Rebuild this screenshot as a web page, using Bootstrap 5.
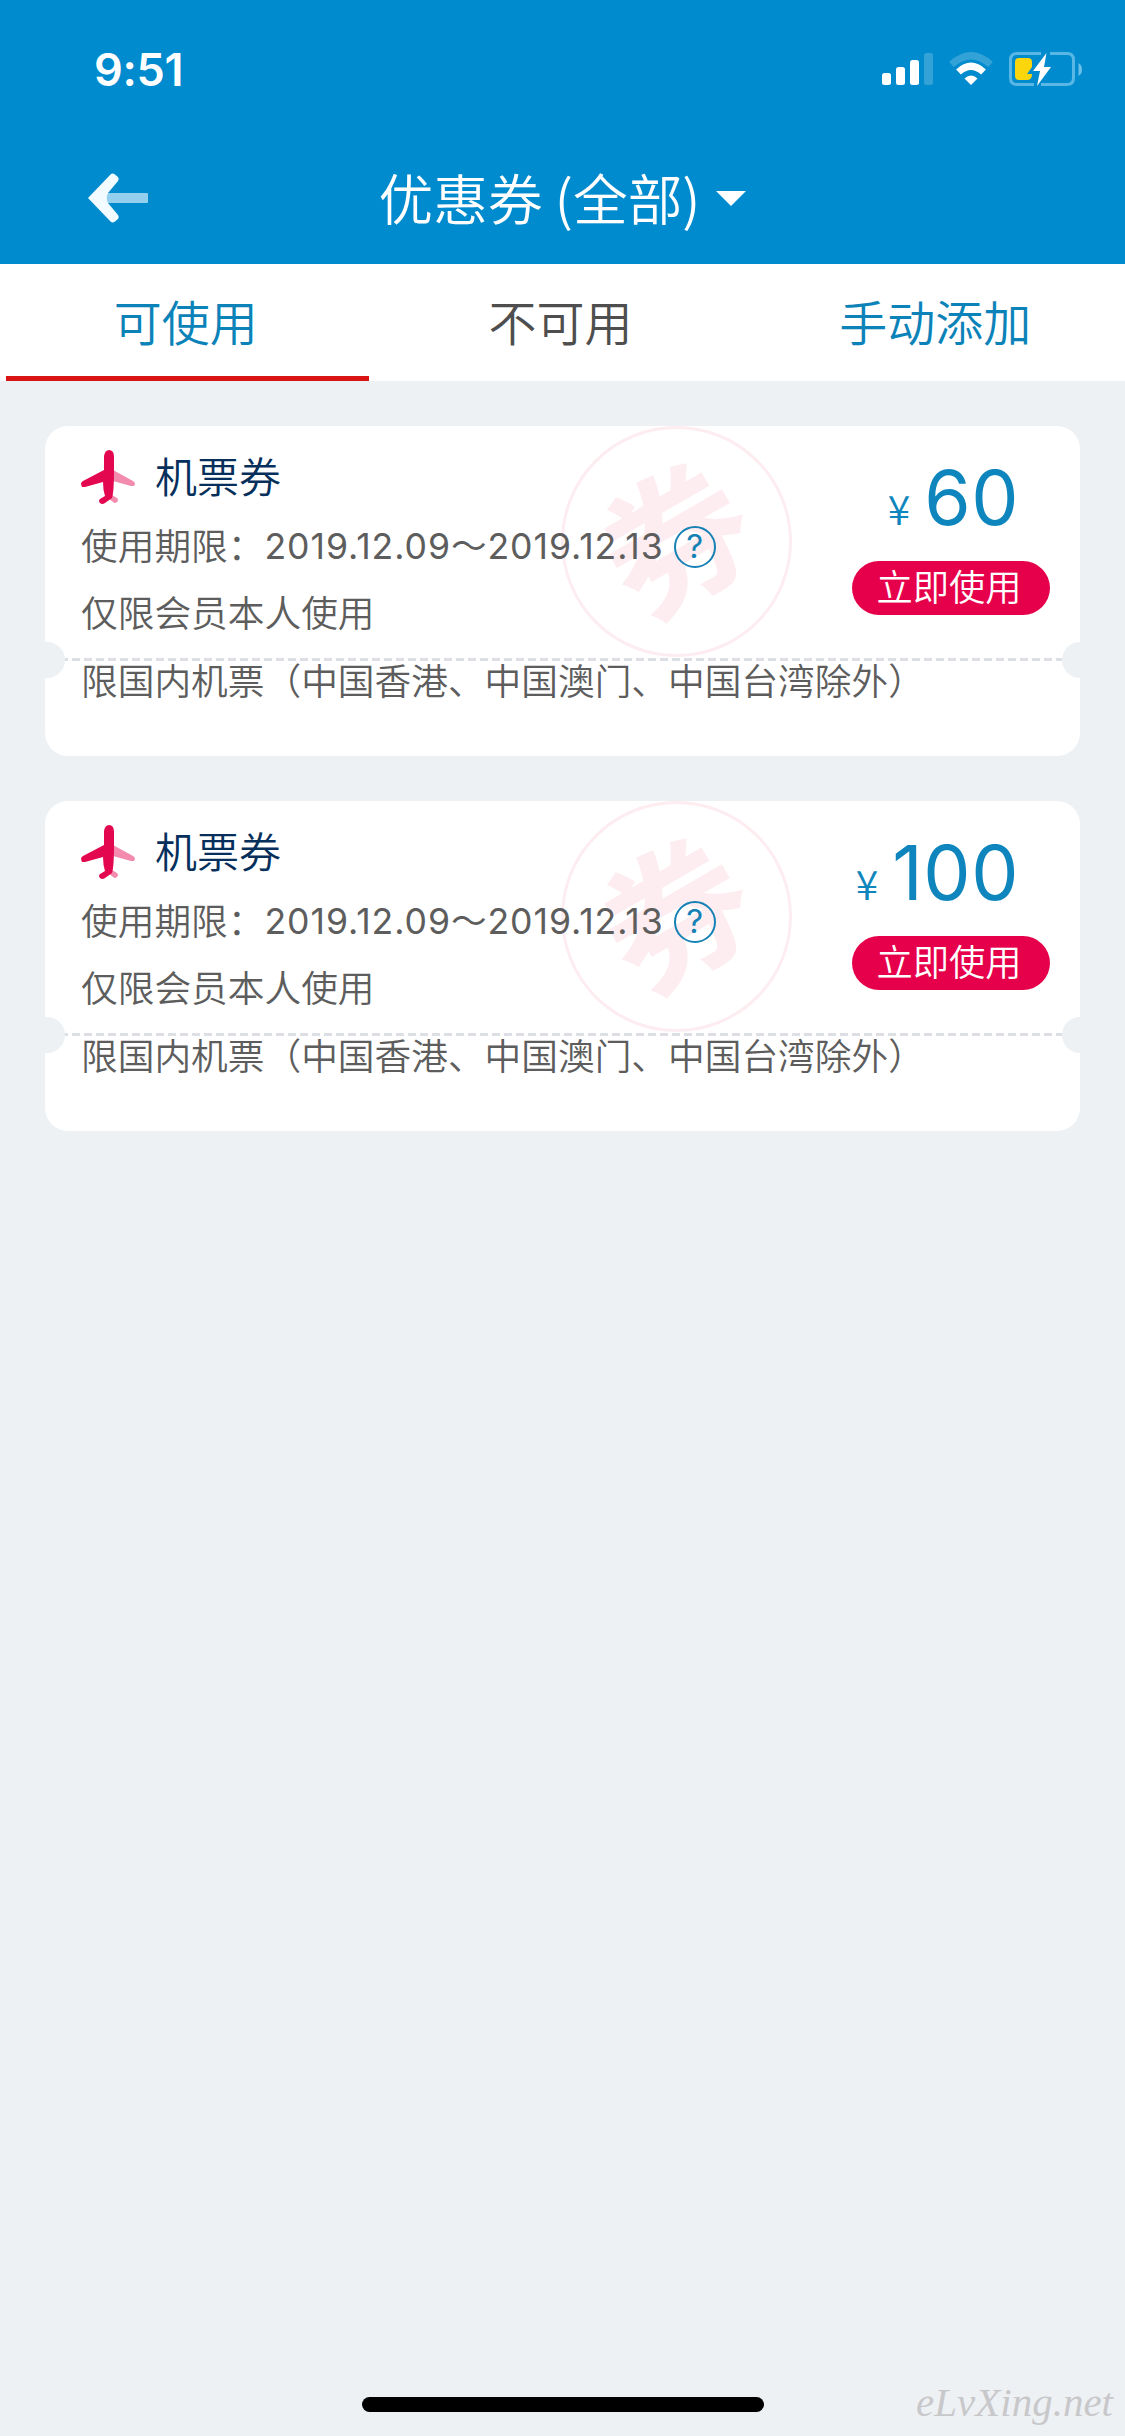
<!DOCTYPE html>
<html lang="zh-CN">
<head>
<meta charset="utf-8">
<meta name="viewport" content="width=device-width, initial-scale=1">
<title>优惠券</title>
<link href="https://cdn.jsdelivr.net/npm/bootstrap@5.3.0/dist/css/bootstrap.min.css" rel="stylesheet">
<style>
body{background:#edf1f4;font-family:Inter,"Noto Sans CJK SC",sans-serif;font-weight:350;width:1125px}
.screen{height:2436px;overflow:hidden}
.app-head{background:#008bce;height:264px;color:#fff}
.status-bar{height:138px;padding:0 40px 0 94px}
.clock{font-size:45px;font-weight:600;line-height:1;letter-spacing:-.3px}
.title-bar{height:120px}
.back-btn{left:88px}
.page-title{font-size:54.7px;line-height:60px}
.page-title .paren{font-family:"Noto Sans CJK SC",sans-serif}
.tab-row{height:117px;background:#fff;font-size:48px}
.tab-row .nav-link{color:#0b83b9;border-radius:0;padding:0;height:117px;line-height:120px}
.tab-row .nav-link.off{color:#4e4e4e}
.tab-row .nav-link.first-tab,.tab-row .nav-link.off{padding-right:3px}
.tab-row .nav-link.add{padding-right:4px}
.tab-line{left:6px;bottom:0;width:363px;height:5px;background:#d91414}
.coupons{padding:45px;gap:45px}
.coupon{height:330px;border:0;border-radius:23px;overflow:hidden;color:#5d5d5d}
.coupon-name{font-size:42px;line-height:54px;color:#06305b;margin-bottom:9px}
.name-text{margin-left:20px;padding-top:2px;line-height:52px}
.coupon-info{padding:24px 0 0 36px}
.info-line{font-size:36.7px;line-height:67.3px;height:67.3px;white-space:nowrap}
.dates{font-size:35.6px;font-weight:400;letter-spacing:.95px}
.help{width:42px;height:42px;margin-left:10px;line-height:1;border:2px solid #1681b5;border-radius:50%;color:#1681b5;font-size:33px;font-weight:400}
.coupon-pay{padding:31px 30px 0 0}
.amount{color:#0e86bd;height:104px;padding-right:31px}
.amount .yen{font-size:41px;line-height:81px;font-family:"Noto Sans CJK SC",sans-serif}
.amount .num{font-size:75px;line-height:81px;font-weight:400;margin-left:14px;letter-spacing:.5px}
.use-btn{width:198px;height:54px;background:#e6004b;color:#fff;font-size:36.3px;line-height:52px;padding:0 4px 0 0;border:0;font-weight:350}
.use-btn:hover{background:#e6004b;color:#fff}
.seal{left:516px;top:0;width:231px;height:231px;border:3px solid #fdedf1;border-radius:50%}
.seal span{font-size:146px;line-height:1;font-weight:700;color:#fdedf1;transform:rotate(-30deg)}
.perforation{left:15px;right:15px;top:232px;height:3px;background:repeating-linear-gradient(90deg,#dce0e4 0 8px,transparent 8px 12px)}
.notch{width:36px;height:36px;border-radius:50%;background:#edf1f4;top:216px}
.notch-l{left:-16px}
.notch-r{right:-18px}
.home-bar{left:362px;bottom:24px;width:402px;height:15px;border-radius:8px;background:#000}
.site-mark{right:12px;bottom:12px;font:italic 400 41px/44px "Liberation Serif",serif;color:#c8c8ca}
</style>
</head>
<body>
<div class="screen position-relative d-flex flex-column">
  <header class="app-head">
    <div class="status-bar d-flex align-items-center justify-content-between">
      <span class="clock">9:51</span>
      <svg width="204" height="36" viewBox="881 51 204 36">
        <g fill="#fff"><rect x="882" y="73" width="9" height="12" rx="2.5"/><rect x="896" y="67" width="9" height="18" rx="2.5"/><rect x="910" y="60" width="9" height="25" rx="2.5"/><rect x="924" y="53" width="9" height="32" rx="2.5" opacity=".2"/></g>
        <path d="M951.500 64.500Q971 47 990.500 64.500" fill="none" stroke="#fff" stroke-width="7" opacity=".2"/>
        <path d="M958.500 72Q971 60.500 983.500 72" fill="none" stroke="#fff" stroke-width="7"/>
        <path d="M964.500 78.500Q971 72.500 977.500 78.500L971 85Z" fill="#fff"/>
        <path d="M1041 53.500H1017Q1010.500 53.500 1010.500 60V78Q1010.500 84.500 1017 84.500H1034M1050 53.500H1067Q1073.500 53.500 1073.500 60V78Q1073.500 84.500 1067 84.500H1041" fill="none" stroke="#58b7e5" stroke-width="3"/>
        <path d="M1078.500 63Q1082 65 1082 69.500T1078.500 76Z" fill="#6cc0e8"/>
        <path d="M1019 58H1028Q1032 58 1032 62V67L1027 74H1032Q1032 80 1027 80H1019Q1015 80 1015 76V62Q1015 58 1019 58Z" fill="#fcd60c"/>
        <path d="M1046.500 53L1033 71H1040L1037 86L1051 67H1044Z" fill="#fff"/>
      </svg>
    </div>
    <div class="title-bar position-relative d-flex align-items-center justify-content-center">
      <a class="back-btn position-absolute d-flex" href="#" aria-label="返回">
        <svg width="60" height="50" viewBox="0 0 60 50"><path d="M18 20H59Q60 20 60 21V29Q60 30 59 30H18Z" fill="#94cfed"/><path d="M0 25L23 1Q25 0 27 1.500L30 4Q31.500 6 30 8L20 20Q17.500 25 20 30L30 42Q31.500 44 30 46L27 48.500Q25 50 23 49Z" fill="#f2fbff"/></svg>
      </a>
      <div class="page-title d-flex align-items-center"><span>优惠券<span class="paren"> (</span>全部<span class="paren">)</span></span>
        <svg class="ms-3" width="30" height="15" viewBox="0 0 30 15"><path d="M0 0H30L15 15Z" fill="#fff"/></svg></div>
    </div>
  </header>
  <nav class="tab-row nav nav-justified position-relative">
    <a class="nav-link col first-tab" href="#">可使用</a>
    <a class="nav-link col off" href="#">不可用</a>
    <a class="nav-link col add" href="#">手动添加</a>
    <span class="tab-line position-absolute"></span>
  </nav>
  <main class="coupons d-flex flex-column flex-grow-1">
    <article class="card coupon">
      <div class="seal position-absolute d-flex align-items-center justify-content-center"><span>券</span></div>
      <div class="perforation position-absolute"></div><i class="notch notch-l position-absolute"></i><i class="notch notch-r position-absolute"></i>
      <div class="coupon-info position-relative">
        <div class="d-flex align-items-center coupon-name"><svg width="54" height="54" viewBox="0 0 54 54"><path d="M32 20L52 31Q54 32 54 34L53 36H50L32 31ZM31 45L36 48Q38 50 36 52Q34 54 32 52L27 48Z" fill="#f28bad"/><path d="M28 0Q24 0 23 6V20L2 31Q0 32 0 34L1 37H4L22 32Q22 40 24 46L19 49Q17 51 19 53Q21 55 24 53L31 48Q33 42 33 20V7Q33 0 28 0Z" fill="#e30750"/></svg><span class="name-text">机票券</span></div>
        <div class="info-line d-flex align-items-center"><span>使用期限：</span><span class="dates">2019.12.09～2019.12.13</span><span class="help d-flex align-items-center justify-content-center">?</span></div>
        <div class="info-line">仅限会员本人使用</div>
        <div class="info-line">限国内机票（中国香港、中国澳门、中国台湾除外）</div>
      </div>
      <div class="coupon-pay position-absolute end-0 top-0 d-flex flex-column align-items-end">
        <div class="amount d-flex align-items-baseline"><span class="yen">¥</span><span class="num">60</span></div>
        <button class="btn rounded-pill use-btn">立即使用</button>
      </div>
    </article>
    <article class="card coupon">
      <div class="seal position-absolute d-flex align-items-center justify-content-center"><span>券</span></div>
      <div class="perforation position-absolute"></div><i class="notch notch-l position-absolute"></i><i class="notch notch-r position-absolute"></i>
      <div class="coupon-info position-relative">
        <div class="d-flex align-items-center coupon-name"><svg width="54" height="54" viewBox="0 0 54 54"><path d="M32 20L52 31Q54 32 54 34L53 36H50L32 31ZM31 45L36 48Q38 50 36 52Q34 54 32 52L27 48Z" fill="#f28bad"/><path d="M28 0Q24 0 23 6V20L2 31Q0 32 0 34L1 37H4L22 32Q22 40 24 46L19 49Q17 51 19 53Q21 55 24 53L31 48Q33 42 33 20V7Q33 0 28 0Z" fill="#e30750"/></svg><span class="name-text">机票券</span></div>
        <div class="info-line d-flex align-items-center"><span>使用期限：</span><span class="dates">2019.12.09～2019.12.13</span><span class="help d-flex align-items-center justify-content-center">?</span></div>
        <div class="info-line">仅限会员本人使用</div>
        <div class="info-line">限国内机票（中国香港、中国澳门、中国台湾除外）</div>
      </div>
      <div class="coupon-pay position-absolute end-0 top-0 d-flex flex-column align-items-end">
        <div class="amount d-flex align-items-baseline"><span class="yen">¥</span><span class="num">100</span></div>
        <button class="btn rounded-pill use-btn">立即使用</button>
      </div>
    </article>
  </main>
  <div class="home-bar position-absolute"></div>
  <div class="site-mark position-absolute">eLvXing.net</div>
</div>
<script src="https://cdn.jsdelivr.net/npm/bootstrap@5.3.0/dist/js/bootstrap.bundle.min.js"></script>
</body>
</html>
